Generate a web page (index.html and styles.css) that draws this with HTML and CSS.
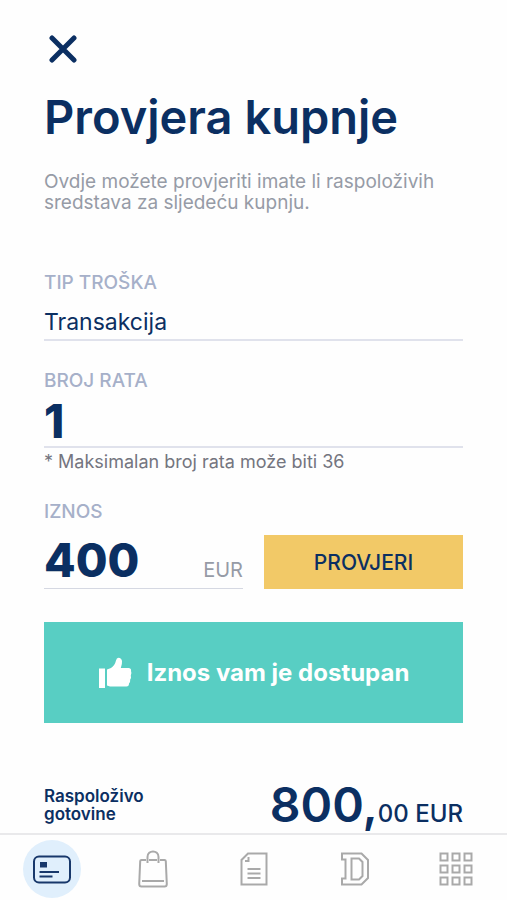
FILE: index.html
```html
<!DOCTYPE html>
<html lang="hr">
<head>
<meta charset="utf-8">
<meta name="viewport" content="width=device-width, initial-scale=1">
<title>Provjera kupnje</title>
<link rel="stylesheet" href="styles.css">
</head>
<body>
<main class="screen">
  <button class="close" type="button" aria-label="Zatvori">
    <svg viewBox="0 0 28 28" width="28" height="28" aria-hidden="true"><path d="M3 3 25 25M25 3 3 25"/></svg>
  </button>
  <h1 class="title">Provjera kupnje</h1>
  <p class="intro">Ovdje možete provjeriti imate li raspoloživih sredstava za sljedeću kupnju.</p>

  <form class="form">
    <div class="field">
      <label class="label" for="type">TIP TROŠKA</label>
      <select class="control control-select" id="type"><option>Transakcija</option></select>
    </div>
    <div class="field">
      <label class="label" for="count">BROJ RATA</label>
      <input class="control control-number" id="count" type="text" inputmode="numeric" value="1">
      <p class="hint">* Maksimalan broj rata može biti 36</p>
    </div>
    <div class="field">
      <label class="label" for="amount">IZNOS</label>
      <div class="amount-row">
        <div class="amount">
          <input class="amount-input" id="amount" type="text" inputmode="decimal" value="400">
          <span class="currency">EUR</span>
        </div>
        <button class="submit" type="button">PROVJERI</button>
      </div>
    </div>
  </form>

  <div class="result" role="status">
    <svg viewBox="0 0 34 32" width="34" height="32" aria-hidden="true"><path d="M1 11.500H7V31H1ZM9 12.500 13 11Q17 8 18 3.500Q18.500 .8 20.500 .8Q23.500 1 24 4Q24.300 7 22.800 11H31Q33.500 11.500 33 14Q34 16 32.800 18.500Q33.500 20.500 32.200 22.500Q32.500 25 31 26.500Q31 29.500 28.500 29.500H12L9 28.500Z"/></svg>
    <span>Iznos vam je dostupan</span>
  </div>

  <div class="balance">
    <span class="balance-label">Raspoloživo<br>gotovine</span>
    <span class="balance-value"><strong>800,</strong>00 EUR</span>
  </div>
</main>

<nav class="tabs" aria-label="Glavna navigacija">
  <a class="tab tab-active" href="#kartica" aria-label="Kartica">
    <svg viewBox="0 0 58 58" width="58" height="58" aria-hidden="true">
      <rect x="11" y="16.500" width="36" height="26" rx="5" fill="none" stroke="currentColor" stroke-width="2"/>
      <rect x="17" y="22" width="7" height="5.500" fill="currentColor"/>
      <path d="M16.500 32H36M16.500 36.500H29.500" fill="none" stroke="currentColor" stroke-width="2"/>
    </svg>
  </a>
  <a class="tab" href="#kupnja" aria-label="Kupnja">
    <svg class="line" viewBox="0 0 32 38" width="32" height="38" aria-hidden="true"><path d="M9 10H4.500Q3.300 10 3.200 11.200L2.200 34Q2.200 36.500 4.500 36.500H27.500Q29.800 36.500 29.800 34L28.800 11.200Q28.700 10 27.500 10H23M12 10H20M5 31H27M10.500 13V7C10.500 -.5 21.500 -.5 21.500 7V13"/></svg>
  </a>
  <a class="tab" href="#racuni" aria-label="Računi">
    <svg class="line" viewBox="0 0 28 34" width="28" height="34" aria-hidden="true"><path d="M8 1.500H26.500V32.500H1.500V8ZM8.500 5V9H5M7.500 17H20.500M7.500 21.500H20.500M7.500 26H20.500"/></svg>
  </a>
  <a class="tab" href="#klub" aria-label="Klub">
    <svg class="line" viewBox="0 0 28 34" width="28" height="34" aria-hidden="true"><path d="M1 1.500H20.500L27 8V26L20.500 32.500H1V26.500H4.500V7.500H1ZM10.500 6.500H18L21.500 10V24L18 27.500H10.500Z"/></svg>
  </a>
  <a class="tab" href="#izbornik" aria-label="Izbornik">
    <svg class="line" viewBox="0 0 34 34" width="34" height="34" aria-hidden="true"><path d="M1.500 1.500h7v7h-7zM13.500 1.500h7v7h-7zM25.500 1.500h7v7h-7zM1.500 13.500h7v7h-7zM13.500 13.500h7v7h-7zM25.500 13.500h7v7h-7zM1.500 25.500h7v7h-7zM13.500 25.500h7v7h-7zM25.500 25.500h7v7h-7z"/></svg>
  </a>
</nav>
</body>
</html>
```
FILE: styles.css
```css
:root {
  --navy: #0b2f62;
  --label: #a6b0c9;
  --rule: #e0e2ec;
}

* {
  box-sizing: border-box;
}

body {
  margin: 0;
  min-height: 100vh;
  display: flex;
  flex-direction: column;
  background: #fefefe;
  color: var(--navy);
  font-family: Inter, "Noto Sans", sans-serif;
}

h1,
p {
  margin: 0;
}

button,
input,
select {
  font-family: inherit;
  color: inherit;
}

.screen {
  flex: 1;
  padding: 35px 44px 0;
}

.close {
  display: block;
  margin-left: 5px;
  padding: 0;
  border: 0;
  background: none;
  height: 28px;
}

.close svg {
  display: block;
  fill: none;
  stroke: currentColor;
  stroke-width: 5;
  stroke-linecap: round;
}

.title {
  margin-top: 26px;
  font-size: 47px;
  line-height: 56px;
  font-weight: 600;
}

.intro {
  margin-top: 26px;
  font-size: 19px;
  line-height: 21px;
  color: #969ba6;
}

.form {
  display: flex;
  flex-direction: column;
  gap: 30px;
  margin-top: 60px;
}

.field {
  display: flex;
  flex-direction: column;
}

.label {
  font-size: 19px;
  line-height: 20px;
  font-weight: 500;
  color: var(--label);
}

.control {
  appearance: none;
  width: 100%;
  padding: 0;
  border: 0;
  border-bottom: 2px solid var(--rule);
  border-radius: 0;
  background: none;
}

.control-select {
  margin-top: 12px;
  height: 36px;
  font-size: 23px;
}

.control-number {
  margin-top: 7px;
  padding-bottom: 2px;
  height: 50px;
  font-size: 46px;
  font-weight: 800;
}

.hint {
  margin-top: 4px;
  font-size: 18px;
  line-height: 20px;
  color: #74757f;
}

.amount-row {
  display: grid;
  grid-template-columns: repeat(2, minmax(0, 1fr));
  gap: 21px;
  margin-top: 13px;
}

.amount {
  display: flex;
  align-items: baseline;
  height: 54px;
  border-bottom: 1px solid #d5d8e2;
}

.amount-input {
  flex: 1;
  min-width: 0;
  height: 50px;
  padding: 0;
  border: 0;
  background: none;
  font-size: 46px;
  font-weight: 800;
}

.currency {
  font-size: 20px;
  color: #969ba6;
}

.submit {
  border: 0;
  padding: 0;
  background: #f2c967;
  font-size: 21px;
  font-weight: 500;
}

.result {
  display: flex;
  align-items: center;
  justify-content: center;
  gap: 15px;
  height: 101px;
  margin-top: 33px;
  background: #58cec3;
  color: #fff;
  font-size: 24px;
  font-weight: 700;
}

.result svg {
  fill: currentColor;
}

.balance {
  display: flex;
  align-items: center;
  justify-content: space-between;
  margin-top: 58px;
  padding-bottom: 3px;
}

.balance-label {
  font-size: 17px;
  line-height: 18px;
  font-weight: 600;
}

.balance-value {
  font-size: 24px;
  line-height: 24px;
  font-weight: 500;
}

.balance-value strong {
  font-size: 48px;
  line-height: 48px;
  font-weight: 600;
}

.tabs {
  display: grid;
  grid-template-columns: repeat(5, 1fr);
  height: 67px;
  padding-left: 1px;
  border-top: 2px solid #e9e9eb;
  background: #fefefe;
}

.tab {
  display: flex;
  align-items: center;
  justify-content: center;
  height: 65px;
  padding-top: 3px;
  color: #a9a9a9;
}

.tab svg {
  display: block;
}

.tab-active svg {
  border-radius: 50%;
  background: #e0effc;
  color: #18386b;
}

.line {
  fill: none;
  stroke: currentColor;
  stroke-width: 2;
}
```
